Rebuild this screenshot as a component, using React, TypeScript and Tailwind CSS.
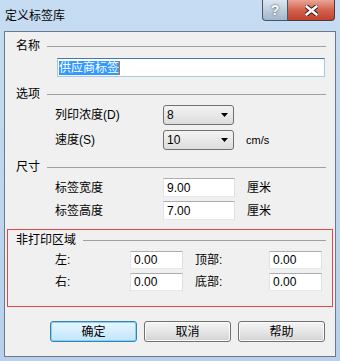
import React from 'react';

function Header({ label, className = '' }: { label: string; className?: string }) {
  return (
    <div className={`flex items-center h-[14px] ${className}`}>
      <span className="text-[12px] leading-[14px] text-black">{label}</span>
      <div className="flex-1 h-px bg-[#a0a0a0] ml-[7px]" />
    </div>
  );
}

function Combo({ value }: { value: string }) {
  return (
    <div className="w-[71px] h-[20px] border border-[#707070] rounded-[3px] bg-linear-to-b from-[#f3f3f3] to-[#dddddd] flex items-center justify-between pl-[3px] pr-[5px]">
      <span className="text-[12px] leading-[14px] text-black">{value}</span>
      <svg width="7" height="4" viewBox="0 0 7 4">
        <path d="M0 0H7L3.5 4Z" fill="#000" />
      </svg>
    </div>
  );
}

function TextBox({ value, w, h }: { value: string; w: string; h: string }) {
  return (
    <div
      className={`${w} ${h} bg-white border border-t-[#abadb3] border-l-[#e2e3ea] border-r-[#dbdfe6] border-b-[#e3e9ef] flex items-center pl-[3px]`}
    >
      <span className="text-[12px] leading-[14px] text-black">{value}</span>
    </div>
  );
}

function Btn({ label, primary = false }: { label: string; primary?: boolean }) {
  return (
    <div
      className={
        primary
          ? 'w-[87px] h-[21px] rounded-[3px] border border-[#3c7fb1] bg-linear-to-b from-[#eaf6fd] to-[#bee6fd] shadow-[inset_0_0_0_1px_#7fd4f8] flex items-center justify-center'
          : 'w-[87px] h-[21px] rounded-[3px] border border-[#707070] bg-linear-to-b from-[#f4f4f4] via-[#e6e6e6] to-[#d3d3d3] shadow-[inset_0_0_0_1px_#fbfbfb] flex items-center justify-center'
      }
    >
      <span className="text-[12px] leading-[14px] text-black">{label}</span>
    </div>
  );
}

export default function App() {
  return (
    <div className="w-[340px] h-[361px] flex flex-col bg-linear-to-b from-[#c6dcf2] via-[#bfd6ee] to-[#b8d0ea] font-['Liberation_Sans','Noto_Sans_CJK_SC',sans-serif]">
      {/* Title bar */}
      <div className="h-[31px] flex justify-between">
        <span className="pl-[5px] pt-[8px] text-[12px] leading-[16px] text-black">定义标签库</span>
        <div className="flex items-start mr-[5px]">
          <div className="w-[26px] h-[21px] border border-[#4a5563] border-t-0 rounded-bl-[4px] bg-linear-to-b from-[#dce6f1] to-[#a3b6ca] flex items-center justify-center">
            <span className="text-[14px] font-bold leading-[14px] text-white [text-shadow:0_0_2px_#233]">?</span>
          </div>
          <div className="w-[47px] h-[21px] border border-l-0 border-t-0 border-[#4a3a38] rounded-br-[4px] bg-linear-to-b from-[#e8a497] via-[#d4624e] to-[#c0412c] flex items-center justify-center">
            <svg width="13" height="11" viewBox="0 0 13 11">
              <path d="M1.5 1.5L11.5 9.5M11.5 1.5L1.5 9.5" stroke="#3a1a14" strokeWidth="4.5" strokeLinecap="round" />
              <path d="M1.5 1.5L11.5 9.5M11.5 1.5L1.5 9.5" stroke="#fff" strokeWidth="2.6" strokeLinecap="round" />
            </svg>
          </div>
        </div>
      </div>

      {/* Client area */}
      <div className="mx-[4px] h-[326px] border border-[#6b7a8b] bg-[#f0f0f0] flex flex-col">
        <Header label="名称" className="mt-[7px] pl-[11px] pr-[9px]" />
        <div className="mt-[5px] ml-[52px] w-[268px] h-[19px] bg-white border border-[#a4c9e3] border-t-[#3d7bad] flex items-center pl-[1px]">
          <span className="bg-[#3399ff] text-white text-[12px] leading-[14px] border-r border-[#d86a10]">供应商标签</span>
        </div>

        <Header label="选项" className="mt-[10px] pl-[11px] pr-[9px]" />
        <div className="mt-[4px] h-[20px] flex items-center">
          <span className="w-[158px] pl-[50px] text-[12px] leading-[14px] text-black">列印浓度(D)</span>
          <Combo value="8" />
        </div>
        <div className="mt-[5px] h-[20px] flex items-center">
          <span className="w-[158px] pl-[50px] text-[12px] leading-[14px] text-black">速度(S)</span>
          <Combo value="10" />
          <span className="ml-[12px] text-[11px] leading-[14px] text-black">cm/s</span>
        </div>

        <Header label="尺寸" className="mt-[10px] pl-[11px] pr-[9px]" />
        <div className="mt-[4px] h-[19px] flex items-center">
          <span className="w-[158px] pl-[50px] text-[12px] leading-[14px] text-black">标签宽度</span>
          <TextBox value="9.00" w="w-[72px]" h="h-[19px]" />
          <span className="ml-[12px] text-[12px] leading-[14px] text-black">厘米</span>
        </div>
        <div className="mt-[4px] h-[19px] flex items-center">
          <span className="w-[158px] pl-[50px] text-[12px] leading-[14px] text-black">标签高度</span>
          <TextBox value="7.00" w="w-[72px]" h="h-[19px]" />
          <span className="ml-[12px] text-[12px] leading-[14px] text-black">厘米</span>
        </div>

        {/* Non-print area */}
        <div className="mt-[9px] mx-[2px] h-[78px] border border-[#e04848] flex flex-col">
          <Header label="非打印区域" className="mt-[3px] pl-[8px] pr-[6px]" />
          <div className="mt-[4px] h-[18px] flex items-center">
            <span className="w-[122px] pl-[47px] text-[12px] leading-[14px] text-black">左:</span>
            <TextBox value="0.00" w="w-[53px]" h="h-[18px]" />
            <span className="w-[86px] pl-[12px] text-[12px] leading-[14px] text-black">顶部:</span>
            <TextBox value="0.00" w="w-[53px]" h="h-[18px]" />
          </div>
          <div className="mt-[4px] h-[18px] flex items-center">
            <span className="w-[122px] pl-[47px] text-[12px] leading-[14px] text-black">右:</span>
            <TextBox value="0.00" w="w-[53px]" h="h-[18px]" />
            <span className="w-[86px] pl-[12px] text-[12px] leading-[14px] text-black">底部:</span>
            <TextBox value="0.00" w="w-[53px]" h="h-[18px]" />
          </div>
        </div>

        <div className="mt-[14px] flex justify-end gap-[7px] pr-[10px]">
          <Btn label="确定" primary />
          <Btn label="取消" />
          <Btn label="帮助" />
        </div>
      </div>
    </div>
  );
}
